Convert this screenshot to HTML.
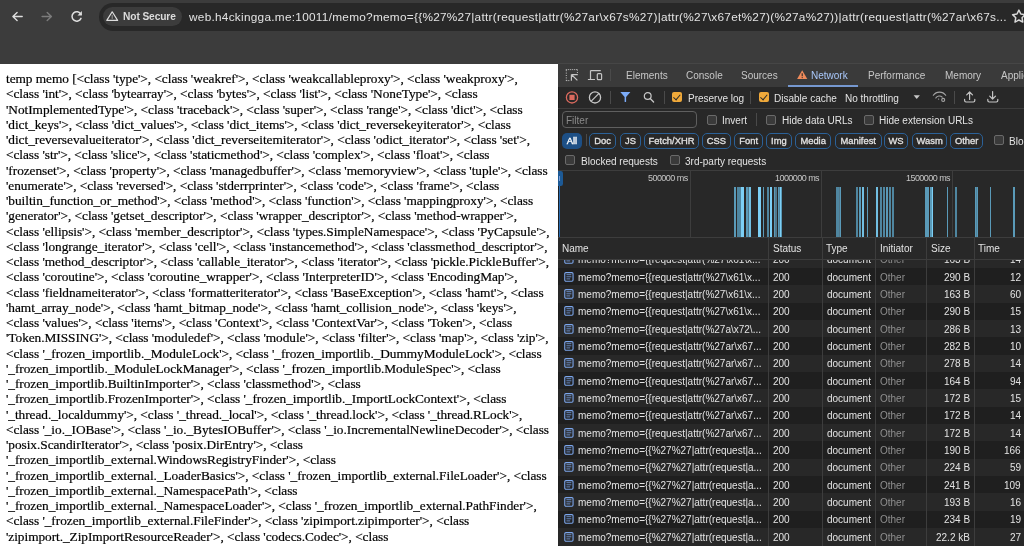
<!DOCTYPE html>
<html><head><meta charset="utf-8">
<style>
*{margin:0;padding:0;box-sizing:border-box}
html,body{width:1024px;height:546px;overflow:hidden;background:#fff}
body{position:relative;font-family:"Liberation Sans",sans-serif}
.a{position:absolute}
.t{position:absolute;white-space:nowrap;will-change:transform}
#bar{left:0;top:0;width:1024px;height:64px;background:#3c3c3c}
#omni{left:99px;top:3px;width:960px;height:27.5px;border-radius:14px;background:#282828}
#chip{left:102.5px;top:6.8px;width:79.5px;height:19.5px;border-radius:10px;background:#3c3c3c}
#page{left:0;top:64px;width:558px;height:482px;background:#fff;overflow:hidden}
#ptxt{left:6px;top:7.2px;font-family:"Liberation Serif",serif;font-size:13.33px;line-height:15.25px;color:#000;white-space:pre;letter-spacing:-0.05px;will-change:transform;-webkit-text-stroke:0.2px #000}
#dt{left:558px;top:64px;width:466px;height:482px;background:#282828;overflow:hidden;color:#e3e3e3;font-size:10px}
.sep{position:absolute;width:1px;background:#4a4a4a}
.hl{position:absolute;height:1px;background:#3d3d3d;left:0;width:466px}
.cb{position:absolute;width:10px;height:10px;border:1px solid #6a6a6a;border-radius:2px;background:#3a3a3a}
.cbo{position:absolute;width:10px;height:10px;border-radius:2px;background:#f0a93a}
.cbo:after{content:'';position:absolute;left:3.2px;top:1.2px;width:3px;height:5.6px;border:solid #2a2a2a;border-width:0 1.3px 1.3px 0;transform:rotate(40deg)}
.chip{position:absolute;top:68.7px;height:16px;border:1px solid #2b6198;border-radius:5px;color:#e3e3e3;font-size:9.4px;line-height:14px;text-align:center;-webkit-text-stroke:0.3px #e3e3e3;will-change:transform}
.row{position:absolute;left:0;width:466px;height:17.33px}
.vl{position:absolute;width:1px;background:#3d3d3d}
.bar{position:absolute;top:122.9px;height:50px}
</style></head><body>
<div id="bar" class="a"></div>

<svg class="a" style="left:0;top:0" width="100" height="35" viewBox="0 0 100 35">
<g fill="none" stroke="#dedede" stroke-width="1.4" stroke-linecap="round" stroke-linejoin="round">
<path d="M22.2 16.5H13.2M17.1 12.4 12.9 16.5 17.1 20.6"/>
</g>
<g fill="none" stroke="#7c7c7c" stroke-width="1.4" stroke-linecap="round" stroke-linejoin="round">
<path d="M42.1 16.5H51.3M47.2 12.4 51.4 16.5 47.2 20.6"/>
</g>
<g fill="none" stroke="#dedede" stroke-width="1.5" stroke-linecap="round">
<path d="M80.9 14.3A4.7 4.7 0 1 0 81 18.4"/>
</g>
<path d="M81.9 11.1V15.6H77.5Z" fill="#dedede"/>
</svg>

<div id="omni" class="a"></div><div id="chip" class="a"></div>
<svg class="a" style="left:105px;top:10px" width="15" height="13" viewBox="0 0 15 13">
<path d="M7.2 1.8 1.8 10.4H12.6Z" fill="none" stroke="#dedede" stroke-width="1.2" stroke-linejoin="round"/>
<path d="M7.2 4.8V8.9" stroke="#9a9a9a" stroke-width="1"/>
</svg>
<div class="t" style="left:122.5px;top:10px;font-size:10.2px;letter-spacing:-0.1px;font-weight:bold;color:#dcdcdc;line-height:13px">Not Secure</div>
<div class="t" style="left:189.4px;top:9.5px;font-size:11.8px;letter-spacing:0.276px;color:#e3e3e3;line-height:14px">web.h4ckingga.me:10011/memo?memo={{%27%27|attr(request|attr(%27ar\x67s%27)|attr(%27\x67et%27)(%27a%27))|attr(request|attr(%27ar\x67s...</div>
<svg class="a" style="left:1010px;top:8px" width="16" height="16" viewBox="0 0 16 16"><path d="M8.90 2.10 10.84 6.03 15.18 6.66 12.04 9.72 12.78 14.04 8.90 12.00 5.02 14.04 5.76 9.72 2.62 6.66 6.96 6.03Z" fill="none" stroke="#d8d8d8" stroke-width="1.5" stroke-linejoin="round"/></svg>
<div class="a" style="left:558px;top:63px;width:466px;height:1px;background:#464646"></div>
<div id="page" class="a"><div id="ptxt" class="a">temp memo [&lt;class 'type'&gt;, &lt;class 'weakref'&gt;, &lt;class 'weakcallableproxy'&gt;, &lt;class 'weakproxy'&gt;,
&lt;class 'int'&gt;, &lt;class 'bytearray'&gt;, &lt;class 'bytes'&gt;, &lt;class 'list'&gt;, &lt;class 'NoneType'&gt;, &lt;class
'NotImplementedType'&gt;, &lt;class 'traceback'&gt;, &lt;class 'super'&gt;, &lt;class 'range'&gt;, &lt;class 'dict'&gt;, &lt;class
'dict_keys'&gt;, &lt;class 'dict_values'&gt;, &lt;class 'dict_items'&gt;, &lt;class 'dict_reversekeyiterator'&gt;, &lt;class
'dict_reversevalueiterator'&gt;, &lt;class 'dict_reverseitemiterator'&gt;, &lt;class 'odict_iterator'&gt;, &lt;class 'set'&gt;,
&lt;class 'str'&gt;, &lt;class 'slice'&gt;, &lt;class 'staticmethod'&gt;, &lt;class 'complex'&gt;, &lt;class 'float'&gt;, &lt;class
'frozenset'&gt;, &lt;class 'property'&gt;, &lt;class 'managedbuffer'&gt;, &lt;class 'memoryview'&gt;, &lt;class 'tuple'&gt;, &lt;class
'enumerate'&gt;, &lt;class 'reversed'&gt;, &lt;class 'stderrprinter'&gt;, &lt;class 'code'&gt;, &lt;class 'frame'&gt;, &lt;class
'builtin_function_or_method'&gt;, &lt;class 'method'&gt;, &lt;class 'function'&gt;, &lt;class 'mappingproxy'&gt;, &lt;class
'generator'&gt;, &lt;class 'getset_descriptor'&gt;, &lt;class 'wrapper_descriptor'&gt;, &lt;class 'method-wrapper'&gt;,
&lt;class 'ellipsis'&gt;, &lt;class 'member_descriptor'&gt;, &lt;class 'types.SimpleNamespace'&gt;, &lt;class 'PyCapsule'&gt;,
&lt;class 'longrange_iterator'&gt;, &lt;class 'cell'&gt;, &lt;class 'instancemethod'&gt;, &lt;class 'classmethod_descriptor'&gt;,
&lt;class 'method_descriptor'&gt;, &lt;class 'callable_iterator'&gt;, &lt;class 'iterator'&gt;, &lt;class 'pickle.PickleBuffer'&gt;,
&lt;class 'coroutine'&gt;, &lt;class 'coroutine_wrapper'&gt;, &lt;class 'InterpreterID'&gt;, &lt;class 'EncodingMap'&gt;,
&lt;class 'fieldnameiterator'&gt;, &lt;class 'formatteriterator'&gt;, &lt;class 'BaseException'&gt;, &lt;class 'hamt'&gt;, &lt;class
'hamt_array_node'&gt;, &lt;class 'hamt_bitmap_node'&gt;, &lt;class 'hamt_collision_node'&gt;, &lt;class 'keys'&gt;,
&lt;class 'values'&gt;, &lt;class 'items'&gt;, &lt;class 'Context'&gt;, &lt;class 'ContextVar'&gt;, &lt;class 'Token'&gt;, &lt;class
'Token.MISSING'&gt;, &lt;class 'moduledef'&gt;, &lt;class 'module'&gt;, &lt;class 'filter'&gt;, &lt;class 'map'&gt;, &lt;class 'zip'&gt;,
&lt;class '_frozen_importlib._ModuleLock'&gt;, &lt;class '_frozen_importlib._DummyModuleLock'&gt;, &lt;class
'_frozen_importlib._ModuleLockManager'&gt;, &lt;class '_frozen_importlib.ModuleSpec'&gt;, &lt;class
'_frozen_importlib.BuiltinImporter'&gt;, &lt;class 'classmethod'&gt;, &lt;class
'_frozen_importlib.FrozenImporter'&gt;, &lt;class '_frozen_importlib._ImportLockContext'&gt;, &lt;class
'_thread._localdummy'&gt;, &lt;class '_thread._local'&gt;, &lt;class '_thread.lock'&gt;, &lt;class '_thread.RLock'&gt;,
&lt;class '_io._IOBase'&gt;, &lt;class '_io._BytesIOBuffer'&gt;, &lt;class '_io.IncrementalNewlineDecoder'&gt;, &lt;class
'posix.ScandirIterator'&gt;, &lt;class 'posix.DirEntry'&gt;, &lt;class
'_frozen_importlib_external.WindowsRegistryFinder'&gt;, &lt;class
'_frozen_importlib_external._LoaderBasics'&gt;, &lt;class '_frozen_importlib_external.FileLoader'&gt;, &lt;class
'_frozen_importlib_external._NamespacePath'&gt;, &lt;class
'_frozen_importlib_external._NamespaceLoader'&gt;, &lt;class '_frozen_importlib_external.PathFinder'&gt;,
&lt;class '_frozen_importlib_external.FileFinder'&gt;, &lt;class 'zipimport.zipimporter'&gt;, &lt;class
'zipimport._ZipImportResourceReader'&gt;, &lt;class 'codecs.Codec'&gt;, &lt;class</div></div>
<div id="dt" class="a">
<div class="a" style="left:0;top:0;width:466px;height:22.7px;background:#3a3a3a"></div>
<div class="a" style="left:0;top:22.7px;width:1px;height:460px;background:#1e1e1e"></div>
<div class="t" style="left:67.5px;top:6px;font-size:10px;line-height:12px;color:#c7c7c7">Elements</div>
<div class="t" style="left:127.6px;top:6px;font-size:10px;line-height:12px;color:#c7c7c7">Console</div>
<div class="t" style="left:183.4px;top:6px;font-size:10px;line-height:12px;color:#c7c7c7">Sources</div>
<div class="t" style="left:253.0px;top:6px;font-size:10px;line-height:12px;color:#a8c7fa">Network</div>
<div class="t" style="left:310.0px;top:6px;font-size:10px;line-height:12px;color:#c7c7c7">Performance</div>
<div class="t" style="left:386.5px;top:6px;font-size:10px;line-height:12px;color:#c7c7c7">Memory</div>
<div class="t" style="left:442.7px;top:6px;font-size:10px;line-height:12px;color:#c7c7c7">Application</div>
<div class="a" style="left:230.0px;top:21px;width:70px;height:2px;background:#7698d0"></div>
<svg class="a" style="left:239.0px;top:5.8px" width="11" height="10" viewBox="0 0 11 10"><path d="M5.2 0.3 10.3 9H0.1Z" fill="#ee8a5a"/><path d="M5.2 3.2V6.3" stroke="#282828" stroke-width="1.1"/><circle cx="5.2" cy="7.6" r="0.6" fill="#282828"/></svg>
<svg class="a" style="left:5px;top:4px" width="50" height="18" viewBox="0 0 50 18">
<g fill="none" stroke="#c4c4c4" stroke-width="1">
<path d="M2.8 1.6H15" stroke-dasharray="1 1"/><path d="M14.4 1.6V5.2" stroke-dasharray="1 1.4"/><path d="M3.3 2.2V13" stroke-dasharray="1 1.4"/><path d="M3.3 12.6H7.2" stroke-dasharray="1 1"/>
<path d="M8.4 6.6H14.8M8.4 6.6V12.8M8.6 6.8 14.4 12.4" stroke-width="1.2"/>
<path d="M27.5 2.7H37.8M27.5 2.6V11.6M24.9 11.5H32" stroke-width="1.2"/><rect x="34.3" y="5.7" width="4.3" height="5.9" rx="0.9" stroke-width="1.2"/>
</g></svg>
<div class="sep" style="left:52px;top:5px;height:12px"></div>
<div class="hl" style="top:43.5px"></div>
<svg class="a" style="left:5px;top:26px" width="100" height="18" viewBox="0 0 100 18">
<circle cx="9" cy="7.4" r="5.6" fill="none" stroke="#dc6a5e" stroke-width="1.3"/><rect x="6.4" y="4.8" width="5.2" height="5.2" fill="#dc6a5e"/>
<circle cx="32" cy="7.4" r="5.6" fill="none" stroke="#c7c7c7" stroke-width="1.3"/><path d="M28 11.4 36 3.4" stroke="#c7c7c7" stroke-width="1.3"/>
<path d="M57.3 2.1H67.4L63.1 7V11.7Q62.35 12.3 61.6 11.7V7Z" fill="#7cacf8"/>
<circle cx="84.7" cy="6" r="3.4" fill="none" stroke="#c7c7c7" stroke-width="1.2"/><path d="M87.2 8.5 90.6 12" stroke="#c7c7c7" stroke-width="1.3" stroke-linecap="round"/>
</svg>
<div class="sep" style="left:52px;top:27px;height:13px"></div>
<div class="sep" style="left:105.7px;top:27px;height:13px"></div>
<div class="cbo" style="left:114.2px;top:28px"></div>
<div class="t" style="left:129.6px;top:29px;line-height:12px">Preserve log</div>
<div class="sep" style="left:192px;top:27px;height:13px"></div>
<div class="cbo" style="left:200.7px;top:28px"></div>
<div class="t" style="left:215.8px;top:29px;line-height:12px">Disable cache</div>
<div class="t" style="left:287.3px;top:29px;line-height:12px">No throttling</div>
<svg class="a" style="left:355px;top:30px" width="8" height="6"><path d="M0.6 1.3H6.9L3.75 5.1Z" fill="#c7c7c7"/></svg>
<div class="sep" style="left:396.2px;top:27px;height:13px"></div>
<svg class="a" style="left:374px;top:26px" width="90" height="18" viewBox="0 0 90 18">
<g fill="none" stroke="#a4a4a4" stroke-width="1.1" stroke-linecap="round" stroke-linejoin="round">
<path d="M1.3 5.3A7.6 7.6 0 0 1 13.7 5.3M3.8 8A4 4 0 0 1 10.2 7.2"/>
<circle cx="11.2" cy="9.9" r="1.5"/></g>
<g fill="none" stroke="#c4c4c4" stroke-width="1.2" stroke-linecap="round" stroke-linejoin="round">
<path d="M37.6 2V9.5M34.7 4.9 37.6 2 40.5 4.9M32.6 9.4V10.6Q32.6 12 34 12H41.4Q42.8 12 42.8 10.6V9.4"/>
<path d="M60.6 1.5V9M57.7 6.1 60.6 9 63.5 6.1M55.8 9.4V10.6Q55.8 12 57.2 12H64.4Q65.8 12 65.8 10.6V9.4"/>
</g><circle cx="6.6" cy="9.1" r="0.7" fill="#a4a4a4"/></svg>
<div class="a" style="left:4px;top:47.3px;width:134.5px;height:16.3px;border:1px solid #5f5f5f;border-radius:4px"></div>
<div class="t" style="left:8px;top:51px;line-height:12px;color:#8a8a8a">Filter</div>
<div class="cb" style="left:149.2px;top:50.5px"></div>
<div class="t" style="left:164.2px;top:51px;line-height:12px">Invert</div>
<div class="sep" style="left:198.4px;top:49px;height:13px"></div>
<div class="cb" style="left:208.4px;top:50.5px"></div>
<div class="t" style="left:223.8px;top:51px;line-height:12px">Hide data URLs</div>
<div class="cb" style="left:305.8px;top:50.5px"></div>
<div class="t" style="left:321px;top:51px;line-height:12px">Hide extension URLs</div>
<div class="a" style="left:4px;top:68.7px;width:20px;height:16px;border-radius:5px;background:#1d4f85;color:#fff;font-size:9.4px;-webkit-text-stroke:0.35px #fff;will-change:transform;text-align:center;line-height:16px">All</div>
<div class="sep" style="left:27.7px;top:70px;height:12px"></div>
<div class="chip" style="left:31.2px;width:27.3px">Doc</div>
<div class="chip" style="left:61.7px;width:21.1px">JS</div>
<div class="chip" style="left:86.1px;width:55.1px">Fetch/XHR</div>
<div class="chip" style="left:144.4px;width:28.8px">CSS</div>
<div class="chip" style="left:176.1px;width:29.3px">Font</div>
<div class="chip" style="left:208.3px;width:25.8px">Img</div>
<div class="chip" style="left:237.1px;width:36.3px">Media</div>
<div class="chip" style="left:276.5px;width:46.5px">Manifest</div>
<div class="chip" style="left:326.2px;width:24.1px">WS</div>
<div class="chip" style="left:353.8px;width:35.4px">Wasm</div>
<div class="chip" style="left:392.4px;width:33.4px">Other</div>
<div class="cb" style="left:436.1px;top:71.3px"></div>
<div class="t" style="left:450.8px;top:72px;line-height:12px">Blocked response cookies</div>
<div class="cb" style="left:7.3px;top:91.2px"></div>
<div class="t" style="left:22.6px;top:92px;line-height:12px">Blocked requests</div>
<div class="cb" style="left:111.9px;top:91.2px"></div>
<div class="t" style="left:126.5px;top:92px;line-height:12px">3rd-party requests</div>
<div class="hl" style="top:106px"></div>
<div class="vl" style="left:131.9px;top:106.5px;height:66.5px"></div>
<div class="t" style="right:336.0px;top:109.3px;font-size:9px;letter-spacing:-0.55px;line-height:11px;color:#c7c7c7">500000 ms</div>
<div class="vl" style="left:262.9px;top:106.5px;height:66.5px"></div>
<div class="t" style="right:205.0px;top:109.3px;font-size:9px;letter-spacing:-0.55px;line-height:11px;color:#c7c7c7">1000000 ms</div>
<div class="vl" style="left:394.0px;top:106.5px;height:66.5px"></div>
<div class="t" style="right:73.9px;top:109.3px;font-size:9px;letter-spacing:-0.55px;line-height:11px;color:#c7c7c7">1500000 ms</div>
<div class="a" style="left:0.9px;top:115px;width:1.3px;height:58px;background:#2a6cb0"></div>
<div class="a" style="left:0.4px;top:106.6px;width:4.7px;height:15.1px;border-radius:0 2.2px 2.2px 0;background:#1d5a96"></div>
<div class="a" style="left:1.4px;top:111.8px;width:1.1px;height:5.4px;background:#7a9ed8"></div>
<div class="bar" style="left:175.50px;width:2.40px;background:#5a9ab8"></div>
<div class="bar" style="left:178.90px;width:3.90px;background:#4f86a0"></div>
<div class="bar" style="left:182.80px;width:3.10px;background:#7ccff5"></div>
<div class="bar" style="left:187.80px;width:2.10px;background:#5a9ab8"></div>
<div class="bar" style="left:189.90px;width:1.40px;background:#50788c"></div>
<div class="bar" style="left:191.30px;width:1.80px;background:#72bfe2"></div>
<div class="bar" style="left:199.60px;width:3.80px;background:#7ccff5"></div>
<div class="bar" style="left:204.60px;width:1.80px;background:#5a9ab8"></div>
<div class="bar" style="left:208.70px;width:2.40px;background:#4f86a0"></div>
<div class="bar" style="left:211.60px;width:2.00px;background:#7ccff5"></div>
<div class="bar" style="left:215.70px;width:1.60px;background:#5a9ab8"></div>
<div class="bar" style="left:217.30px;width:1.70px;background:#50788c"></div>
<div class="bar" style="left:220.00px;width:1.40px;background:#5a9ab8"></div>
<div class="bar" style="left:221.40px;width:0.60px;background:#4f86a0"></div>
<div class="bar" style="left:222.00px;width:1.40px;background:#7ccff5"></div>
<div class="bar" style="left:223.40px;width:0.70px;background:#5a9ab8"></div>
<div class="bar" style="left:277.70px;width:3.50px;background:#4f86a0"></div>
<div class="bar" style="left:281.20px;width:0.60px;background:#50788c"></div>
<div class="bar" style="left:281.80px;width:1.40px;background:#5a9ab8"></div>
<div class="bar" style="left:297.60px;width:2.40px;background:#4f86a0"></div>
<div class="bar" style="left:301.00px;width:2.10px;background:#5a9ab8"></div>
<div class="bar" style="left:303.90px;width:2.30px;background:#72bfe2"></div>
<div class="bar" style="left:308.60px;width:1.70px;background:#5a9ab8"></div>
<div class="bar" style="left:317.70px;width:2.70px;background:#72bfe2"></div>
<div class="bar" style="left:321.70px;width:2.30px;background:#4f86a0"></div>
<div class="bar" style="left:324.90px;width:2.30px;background:#4f86a0"></div>
<div class="bar" style="left:327.80px;width:1.80px;background:#5a9ab8"></div>
<div class="bar" style="left:330.80px;width:2.30px;background:#4f86a0"></div>
<div class="bar" style="left:334.30px;width:2.00px;background:#4f86a0"></div>
<div class="bar" style="left:366.90px;width:3.90px;background:#5a9ab8"></div>
<div class="bar" style="left:371.80px;width:1.90px;background:#5a9ab8"></div>
<div class="bar" style="left:373.70px;width:1.80px;background:#7ccff5"></div>
<div class="bar" style="left:388.80px;width:1.50px;background:#5a9ab8"></div>
<div class="bar" style="left:396.80px;width:2.30px;background:#4f86a0"></div>
<div class="bar" style="left:416.50px;width:1.70px;background:#5a9ab8"></div>
<div class="bar" style="left:418.20px;width:0.60px;background:#4f86a0"></div>
<div class="bar" style="left:418.80px;width:1.40px;background:#5a9ab8"></div>
<div class="bar" style="left:431.60px;width:1.70px;background:#5a9ab8"></div>
<div class="bar" style="left:454.60px;width:2.00px;background:#5a9ab8"></div>
<div class="hl" style="top:173px"></div>
<div class="a" style="left:0;top:173.5px;width:466px;height:21.8px;background:#282828"></div>
<div class="t" style="left:4.0px;top:179.4px;line-height:12px">Name</div>
<div class="vl" style="left:209.8px;top:173.5px;height:310px"></div>
<div class="t" style="left:214.5px;top:179.4px;line-height:12px">Status</div>
<div class="vl" style="left:263.7px;top:173.5px;height:310px"></div>
<div class="t" style="left:268.4px;top:179.4px;line-height:12px">Type</div>
<div class="vl" style="left:317.1px;top:173.5px;height:310px"></div>
<div class="t" style="left:321.8px;top:179.4px;line-height:12px">Initiator</div>
<div class="vl" style="left:367.9px;top:173.5px;height:310px"></div>
<div class="t" style="left:372.6px;top:179.4px;line-height:12px">Size</div>
<div class="vl" style="left:415.5px;top:173.5px;height:310px"></div>
<div class="t" style="left:420.2px;top:179.4px;line-height:12px">Time</div>
<div class="hl" style="top:195.3px"></div>
<div class="a" style="left:0;top:195.8px;width:466px;height:290px;overflow:hidden">
<div class="row" style="top:-9.03px;background:#282828">
<svg class="a" style="left:5.6px;top:3.6px" width="11" height="11" viewBox="0 0 11 11"><rect x="0.75" y="0.65" width="8.3" height="8.6" rx="1.2" fill="none" stroke="#7ca6ec" stroke-width="1.1"/><path d="M2.4 2.7H7.4M2.4 4.8H7.4M2.4 6.9H6.2" stroke="#7ca6ec" stroke-width="0.8"/></svg>
<div class="t" style="left:19.8px;top:3.6px;line-height:12px">memo?memo={{request|attr(%27\x61\x...</div>
<div class="t" style="left:214.5px;top:3.6px;line-height:12px">200</div>
<div class="t" style="left:268.8px;top:3.6px;line-height:12px">document</div>
<div class="t" style="left:321.9px;top:3.6px;line-height:12px;color:#8f8f8f">Other</div>
<div class="t" style="right:53.8px;top:3.6px;line-height:12px">163 B</div>
<div class="t" style="right:3.0px;top:3.6px;line-height:12px">14</div>
</div>
<div class="row" style="top:8.30px;background:#1f1f1f">
<svg class="a" style="left:5.6px;top:3.6px" width="11" height="11" viewBox="0 0 11 11"><rect x="0.75" y="0.65" width="8.3" height="8.6" rx="1.2" fill="none" stroke="#7ca6ec" stroke-width="1.1"/><path d="M2.4 2.7H7.4M2.4 4.8H7.4M2.4 6.9H6.2" stroke="#7ca6ec" stroke-width="0.8"/></svg>
<div class="t" style="left:19.8px;top:3.6px;line-height:12px">memo?memo={{request|attr(%27\x61\x...</div>
<div class="t" style="left:214.5px;top:3.6px;line-height:12px">200</div>
<div class="t" style="left:268.8px;top:3.6px;line-height:12px">document</div>
<div class="t" style="left:321.9px;top:3.6px;line-height:12px;color:#8f8f8f">Other</div>
<div class="t" style="right:53.8px;top:3.6px;line-height:12px">290 B</div>
<div class="t" style="right:3.0px;top:3.6px;line-height:12px">12</div>
</div>
<div class="row" style="top:25.63px;background:#282828">
<svg class="a" style="left:5.6px;top:3.6px" width="11" height="11" viewBox="0 0 11 11"><rect x="0.75" y="0.65" width="8.3" height="8.6" rx="1.2" fill="none" stroke="#7ca6ec" stroke-width="1.1"/><path d="M2.4 2.7H7.4M2.4 4.8H7.4M2.4 6.9H6.2" stroke="#7ca6ec" stroke-width="0.8"/></svg>
<div class="t" style="left:19.8px;top:3.6px;line-height:12px">memo?memo={{request|attr(%27\x61\x...</div>
<div class="t" style="left:214.5px;top:3.6px;line-height:12px">200</div>
<div class="t" style="left:268.8px;top:3.6px;line-height:12px">document</div>
<div class="t" style="left:321.9px;top:3.6px;line-height:12px;color:#8f8f8f">Other</div>
<div class="t" style="right:53.8px;top:3.6px;line-height:12px">163 B</div>
<div class="t" style="right:3.0px;top:3.6px;line-height:12px">60</div>
</div>
<div class="row" style="top:42.96px;background:#1f1f1f">
<svg class="a" style="left:5.6px;top:3.6px" width="11" height="11" viewBox="0 0 11 11"><rect x="0.75" y="0.65" width="8.3" height="8.6" rx="1.2" fill="none" stroke="#7ca6ec" stroke-width="1.1"/><path d="M2.4 2.7H7.4M2.4 4.8H7.4M2.4 6.9H6.2" stroke="#7ca6ec" stroke-width="0.8"/></svg>
<div class="t" style="left:19.8px;top:3.6px;line-height:12px">memo?memo={{request|attr(%27\x61\x...</div>
<div class="t" style="left:214.5px;top:3.6px;line-height:12px">200</div>
<div class="t" style="left:268.8px;top:3.6px;line-height:12px">document</div>
<div class="t" style="left:321.9px;top:3.6px;line-height:12px;color:#8f8f8f">Other</div>
<div class="t" style="right:53.8px;top:3.6px;line-height:12px">290 B</div>
<div class="t" style="right:3.0px;top:3.6px;line-height:12px">15</div>
</div>
<div class="row" style="top:60.29px;background:#282828">
<svg class="a" style="left:5.6px;top:3.6px" width="11" height="11" viewBox="0 0 11 11"><rect x="0.75" y="0.65" width="8.3" height="8.6" rx="1.2" fill="none" stroke="#7ca6ec" stroke-width="1.1"/><path d="M2.4 2.7H7.4M2.4 4.8H7.4M2.4 6.9H6.2" stroke="#7ca6ec" stroke-width="0.8"/></svg>
<div class="t" style="left:19.8px;top:3.6px;line-height:12px">memo?memo={{request|attr(%27a\x72\...</div>
<div class="t" style="left:214.5px;top:3.6px;line-height:12px">200</div>
<div class="t" style="left:268.8px;top:3.6px;line-height:12px">document</div>
<div class="t" style="left:321.9px;top:3.6px;line-height:12px;color:#8f8f8f">Other</div>
<div class="t" style="right:53.8px;top:3.6px;line-height:12px">286 B</div>
<div class="t" style="right:3.0px;top:3.6px;line-height:12px">13</div>
</div>
<div class="row" style="top:77.62px;background:#1f1f1f">
<svg class="a" style="left:5.6px;top:3.6px" width="11" height="11" viewBox="0 0 11 11"><rect x="0.75" y="0.65" width="8.3" height="8.6" rx="1.2" fill="none" stroke="#7ca6ec" stroke-width="1.1"/><path d="M2.4 2.7H7.4M2.4 4.8H7.4M2.4 6.9H6.2" stroke="#7ca6ec" stroke-width="0.8"/></svg>
<div class="t" style="left:19.8px;top:3.6px;line-height:12px">memo?memo={{request|attr(%27ar\x67...</div>
<div class="t" style="left:214.5px;top:3.6px;line-height:12px">200</div>
<div class="t" style="left:268.8px;top:3.6px;line-height:12px">document</div>
<div class="t" style="left:321.9px;top:3.6px;line-height:12px;color:#8f8f8f">Other</div>
<div class="t" style="right:53.8px;top:3.6px;line-height:12px">282 B</div>
<div class="t" style="right:3.0px;top:3.6px;line-height:12px">10</div>
</div>
<div class="row" style="top:94.95px;background:#282828">
<svg class="a" style="left:5.6px;top:3.6px" width="11" height="11" viewBox="0 0 11 11"><rect x="0.75" y="0.65" width="8.3" height="8.6" rx="1.2" fill="none" stroke="#7ca6ec" stroke-width="1.1"/><path d="M2.4 2.7H7.4M2.4 4.8H7.4M2.4 6.9H6.2" stroke="#7ca6ec" stroke-width="0.8"/></svg>
<div class="t" style="left:19.8px;top:3.6px;line-height:12px">memo?memo={{request|attr(%27ar\x67...</div>
<div class="t" style="left:214.5px;top:3.6px;line-height:12px">200</div>
<div class="t" style="left:268.8px;top:3.6px;line-height:12px">document</div>
<div class="t" style="left:321.9px;top:3.6px;line-height:12px;color:#8f8f8f">Other</div>
<div class="t" style="right:53.8px;top:3.6px;line-height:12px">278 B</div>
<div class="t" style="right:3.0px;top:3.6px;line-height:12px">14</div>
</div>
<div class="row" style="top:112.28px;background:#1f1f1f">
<svg class="a" style="left:5.6px;top:3.6px" width="11" height="11" viewBox="0 0 11 11"><rect x="0.75" y="0.65" width="8.3" height="8.6" rx="1.2" fill="none" stroke="#7ca6ec" stroke-width="1.1"/><path d="M2.4 2.7H7.4M2.4 4.8H7.4M2.4 6.9H6.2" stroke="#7ca6ec" stroke-width="0.8"/></svg>
<div class="t" style="left:19.8px;top:3.6px;line-height:12px">memo?memo={{request|attr(%27ar\x67...</div>
<div class="t" style="left:214.5px;top:3.6px;line-height:12px">200</div>
<div class="t" style="left:268.8px;top:3.6px;line-height:12px">document</div>
<div class="t" style="left:321.9px;top:3.6px;line-height:12px;color:#8f8f8f">Other</div>
<div class="t" style="right:53.8px;top:3.6px;line-height:12px">164 B</div>
<div class="t" style="right:3.0px;top:3.6px;line-height:12px">94</div>
</div>
<div class="row" style="top:129.61px;background:#282828">
<svg class="a" style="left:5.6px;top:3.6px" width="11" height="11" viewBox="0 0 11 11"><rect x="0.75" y="0.65" width="8.3" height="8.6" rx="1.2" fill="none" stroke="#7ca6ec" stroke-width="1.1"/><path d="M2.4 2.7H7.4M2.4 4.8H7.4M2.4 6.9H6.2" stroke="#7ca6ec" stroke-width="0.8"/></svg>
<div class="t" style="left:19.8px;top:3.6px;line-height:12px">memo?memo={{request|attr(%27ar\x67...</div>
<div class="t" style="left:214.5px;top:3.6px;line-height:12px">200</div>
<div class="t" style="left:268.8px;top:3.6px;line-height:12px">document</div>
<div class="t" style="left:321.9px;top:3.6px;line-height:12px;color:#8f8f8f">Other</div>
<div class="t" style="right:53.8px;top:3.6px;line-height:12px">172 B</div>
<div class="t" style="right:3.0px;top:3.6px;line-height:12px">15</div>
</div>
<div class="row" style="top:146.94px;background:#1f1f1f">
<svg class="a" style="left:5.6px;top:3.6px" width="11" height="11" viewBox="0 0 11 11"><rect x="0.75" y="0.65" width="8.3" height="8.6" rx="1.2" fill="none" stroke="#7ca6ec" stroke-width="1.1"/><path d="M2.4 2.7H7.4M2.4 4.8H7.4M2.4 6.9H6.2" stroke="#7ca6ec" stroke-width="0.8"/></svg>
<div class="t" style="left:19.8px;top:3.6px;line-height:12px">memo?memo={{request|attr(%27ar\x67...</div>
<div class="t" style="left:214.5px;top:3.6px;line-height:12px">200</div>
<div class="t" style="left:268.8px;top:3.6px;line-height:12px">document</div>
<div class="t" style="left:321.9px;top:3.6px;line-height:12px;color:#8f8f8f">Other</div>
<div class="t" style="right:53.8px;top:3.6px;line-height:12px">172 B</div>
<div class="t" style="right:3.0px;top:3.6px;line-height:12px">14</div>
</div>
<div class="row" style="top:164.27px;background:#282828">
<svg class="a" style="left:5.6px;top:3.6px" width="11" height="11" viewBox="0 0 11 11"><rect x="0.75" y="0.65" width="8.3" height="8.6" rx="1.2" fill="none" stroke="#7ca6ec" stroke-width="1.1"/><path d="M2.4 2.7H7.4M2.4 4.8H7.4M2.4 6.9H6.2" stroke="#7ca6ec" stroke-width="0.8"/></svg>
<div class="t" style="left:19.8px;top:3.6px;line-height:12px">memo?memo={{request|attr(%27ar\x67...</div>
<div class="t" style="left:214.5px;top:3.6px;line-height:12px">200</div>
<div class="t" style="left:268.8px;top:3.6px;line-height:12px">document</div>
<div class="t" style="left:321.9px;top:3.6px;line-height:12px;color:#8f8f8f">Other</div>
<div class="t" style="right:53.8px;top:3.6px;line-height:12px">172 B</div>
<div class="t" style="right:3.0px;top:3.6px;line-height:12px">14</div>
</div>
<div class="row" style="top:181.60px;background:#1f1f1f">
<svg class="a" style="left:5.6px;top:3.6px" width="11" height="11" viewBox="0 0 11 11"><rect x="0.75" y="0.65" width="8.3" height="8.6" rx="1.2" fill="none" stroke="#7ca6ec" stroke-width="1.1"/><path d="M2.4 2.7H7.4M2.4 4.8H7.4M2.4 6.9H6.2" stroke="#7ca6ec" stroke-width="0.8"/></svg>
<div class="t" style="left:19.8px;top:3.6px;line-height:12px">memo?memo={{%27%27|attr(request|a...</div>
<div class="t" style="left:214.5px;top:3.6px;line-height:12px">200</div>
<div class="t" style="left:268.8px;top:3.6px;line-height:12px">document</div>
<div class="t" style="left:321.9px;top:3.6px;line-height:12px;color:#8f8f8f">Other</div>
<div class="t" style="right:53.8px;top:3.6px;line-height:12px">190 B</div>
<div class="t" style="right:3.0px;top:3.6px;line-height:12px">166</div>
</div>
<div class="row" style="top:198.93px;background:#282828">
<svg class="a" style="left:5.6px;top:3.6px" width="11" height="11" viewBox="0 0 11 11"><rect x="0.75" y="0.65" width="8.3" height="8.6" rx="1.2" fill="none" stroke="#7ca6ec" stroke-width="1.1"/><path d="M2.4 2.7H7.4M2.4 4.8H7.4M2.4 6.9H6.2" stroke="#7ca6ec" stroke-width="0.8"/></svg>
<div class="t" style="left:19.8px;top:3.6px;line-height:12px">memo?memo={{%27%27|attr(request|a...</div>
<div class="t" style="left:214.5px;top:3.6px;line-height:12px">200</div>
<div class="t" style="left:268.8px;top:3.6px;line-height:12px">document</div>
<div class="t" style="left:321.9px;top:3.6px;line-height:12px;color:#8f8f8f">Other</div>
<div class="t" style="right:53.8px;top:3.6px;line-height:12px">224 B</div>
<div class="t" style="right:3.0px;top:3.6px;line-height:12px">59</div>
</div>
<div class="row" style="top:216.26px;background:#1f1f1f">
<svg class="a" style="left:5.6px;top:3.6px" width="11" height="11" viewBox="0 0 11 11"><rect x="0.75" y="0.65" width="8.3" height="8.6" rx="1.2" fill="none" stroke="#7ca6ec" stroke-width="1.1"/><path d="M2.4 2.7H7.4M2.4 4.8H7.4M2.4 6.9H6.2" stroke="#7ca6ec" stroke-width="0.8"/></svg>
<div class="t" style="left:19.8px;top:3.6px;line-height:12px">memo?memo={{%27%27|attr(request|a...</div>
<div class="t" style="left:214.5px;top:3.6px;line-height:12px">200</div>
<div class="t" style="left:268.8px;top:3.6px;line-height:12px">document</div>
<div class="t" style="left:321.9px;top:3.6px;line-height:12px;color:#8f8f8f">Other</div>
<div class="t" style="right:53.8px;top:3.6px;line-height:12px">241 B</div>
<div class="t" style="right:3.0px;top:3.6px;line-height:12px">109</div>
</div>
<div class="row" style="top:233.59px;background:#282828">
<svg class="a" style="left:5.6px;top:3.6px" width="11" height="11" viewBox="0 0 11 11"><rect x="0.75" y="0.65" width="8.3" height="8.6" rx="1.2" fill="none" stroke="#7ca6ec" stroke-width="1.1"/><path d="M2.4 2.7H7.4M2.4 4.8H7.4M2.4 6.9H6.2" stroke="#7ca6ec" stroke-width="0.8"/></svg>
<div class="t" style="left:19.8px;top:3.6px;line-height:12px">memo?memo={{%27%27|attr(request|a...</div>
<div class="t" style="left:214.5px;top:3.6px;line-height:12px">200</div>
<div class="t" style="left:268.8px;top:3.6px;line-height:12px">document</div>
<div class="t" style="left:321.9px;top:3.6px;line-height:12px;color:#8f8f8f">Other</div>
<div class="t" style="right:53.8px;top:3.6px;line-height:12px">193 B</div>
<div class="t" style="right:3.0px;top:3.6px;line-height:12px">16</div>
</div>
<div class="row" style="top:250.92px;background:#1f1f1f">
<svg class="a" style="left:5.6px;top:3.6px" width="11" height="11" viewBox="0 0 11 11"><rect x="0.75" y="0.65" width="8.3" height="8.6" rx="1.2" fill="none" stroke="#7ca6ec" stroke-width="1.1"/><path d="M2.4 2.7H7.4M2.4 4.8H7.4M2.4 6.9H6.2" stroke="#7ca6ec" stroke-width="0.8"/></svg>
<div class="t" style="left:19.8px;top:3.6px;line-height:12px">memo?memo={{%27%27|attr(request|a...</div>
<div class="t" style="left:214.5px;top:3.6px;line-height:12px">200</div>
<div class="t" style="left:268.8px;top:3.6px;line-height:12px">document</div>
<div class="t" style="left:321.9px;top:3.6px;line-height:12px;color:#8f8f8f">Other</div>
<div class="t" style="right:53.8px;top:3.6px;line-height:12px">234 B</div>
<div class="t" style="right:3.0px;top:3.6px;line-height:12px">19</div>
</div>
<div class="row" style="top:268.25px;background:#282828">
<svg class="a" style="left:5.6px;top:3.6px" width="11" height="11" viewBox="0 0 11 11"><rect x="0.75" y="0.65" width="8.3" height="8.6" rx="1.2" fill="none" stroke="#7ca6ec" stroke-width="1.1"/><path d="M2.4 2.7H7.4M2.4 4.8H7.4M2.4 6.9H6.2" stroke="#7ca6ec" stroke-width="0.8"/></svg>
<div class="t" style="left:19.8px;top:3.6px;line-height:12px">memo?memo={{%27%27|attr(request|a...</div>
<div class="t" style="left:214.5px;top:3.6px;line-height:12px">200</div>
<div class="t" style="left:268.8px;top:3.6px;line-height:12px">document</div>
<div class="t" style="left:321.9px;top:3.6px;line-height:12px;color:#8f8f8f">Other</div>
<div class="t" style="right:53.8px;top:3.6px;line-height:12px">22.2 kB</div>
<div class="t" style="right:3.0px;top:3.6px;line-height:12px">27</div>
</div>
</div>
<div class="vl" style="left:209.8px;top:173.5px;height:310px"></div>
<div class="vl" style="left:263.7px;top:173.5px;height:310px"></div>
<div class="vl" style="left:317.1px;top:173.5px;height:310px"></div>
<div class="vl" style="left:367.9px;top:173.5px;height:310px"></div>
<div class="vl" style="left:415.5px;top:173.5px;height:310px"></div>
<div class="a" style="left:1.5px;top:0;width:1px;height:0"></div>
</div>
</body></html>
